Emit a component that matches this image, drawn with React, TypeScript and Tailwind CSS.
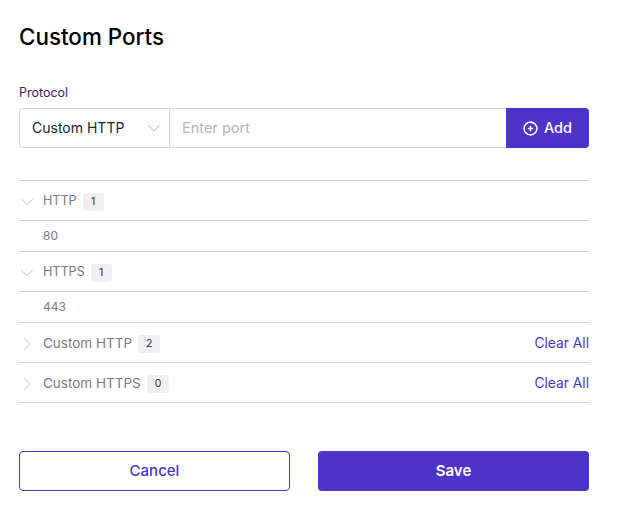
import { ChevronDown, ChevronRight } from 'lucide-react';

const font = "font-['Inter','Noto_Sans',sans-serif]";

function Group({
  name,
  count,
  open,
  port,
  clear,
}: {
  name: string;
  count: number;
  open?: boolean;
  port?: string;
  clear?: boolean;
}) {
  return (
    <>
      <div className="flex h-10 items-center border-b border-[#d4d4d6] pt-0.5">
        <div className="flex w-6 justify-center pr-2 text-[#a9a9b1]">
          {open ? (
            <ChevronDown size={22} strokeWidth={0.8} className="shrink-0" />
          ) : (
            <ChevronRight size={22} strokeWidth={0.8} className="shrink-0" />
          )}
        </div>
        <span className={open ? 'text-[12.6px] text-[#7b7883]' : 'text-[13.5px] text-[#7b7883]'}>
          {name}
        </span>
        <span className="ml-1.5 flex h-[18px] min-w-[21px] items-center justify-center rounded-[3px] bg-[#f0f0f2] px-2 text-[10.5px] text-[#2c2a38]">
          {count}
        </span>
        {clear && <button className="ml-auto text-[13.8px] text-[#4e33c9]">Clear All</button>}
      </div>
      {port && (
        <div className="flex h-[31px] items-center border-b border-[#d4d4d6] pl-6 text-xs text-[#7b7883]">
          {port}
        </div>
      )}
    </>
  );
}

export default function App() {
  return (
    <div className={`${font} h-[513px] w-[626px] bg-white pt-[23px] pr-[37px] pl-[19px]`}>
      <h1 className="text-[22.4px] leading-[28px] font-medium text-black">Custom Ports</h1>

      <label className="mt-[34px] block text-[12.5px] leading-4 text-[#3b1a5e]">Protocol</label>
      <div className="mt-[7px] flex h-10">
        <div className="flex w-[151px] items-center justify-between rounded-l border border-[#d4d4d6] pr-1 pl-3 text-sm text-[#22223a]">
          Custom HTTP
          <ChevronDown size={22} strokeWidth={0.8} className="text-[#8f8f99]" />
        </div>
        <input
          aria-label="Port"
          placeholder="Enter port"
          className="min-w-0 flex-1 border-y border-[#d4d4d6] bg-transparent px-3 text-[14.5px] outline-none placeholder:text-[#b5b4bd]"
        />
        <button className="flex w-[83px] items-center justify-center gap-1.5 rounded-r bg-[#4e33c9] text-[14.5px] font-medium text-white">
          <svg width="15" height="15" viewBox="0 0 14 14" fill="none" stroke="currentColor">
            <circle cx="7" cy="7" r="6" strokeWidth="1.5" />
            <path d="M7 4.5v5M4.5 7h5" strokeWidth="1.5" />
          </svg>
          Add
        </button>
      </div>

      <div className="mt-8 border-t border-[#d4d4d6]">
        <Group name="HTTP" count={1} open port="80" />
        <Group name="HTTPS" count={1} open port="443" />
        <Group name="Custom HTTP" count={2} clear />
        <Group name="Custom HTTPS" count={0} clear />
      </div>

      <div className="mt-12 flex justify-between">
        <button className="h-10 w-[271px] rounded border border-[#4e33c9] text-[15px] font-medium text-[#4e33c9]">
          Cancel
        </button>
        <button className="h-10 w-[271px] rounded bg-[#4e33c9] text-[15px] font-semibold text-white">
          Save
        </button>
      </div>
    </div>
  );
}
